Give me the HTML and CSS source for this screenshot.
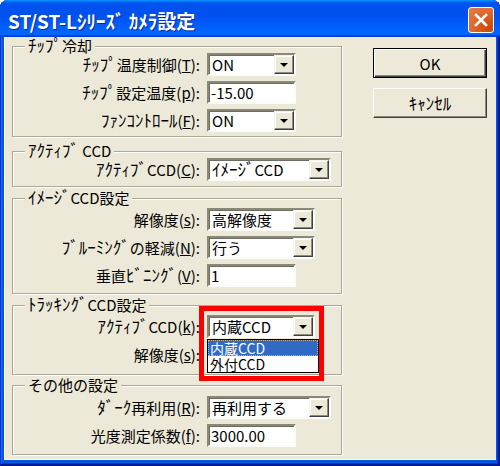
FILE: index.html
```html
<!DOCTYPE html>
<html lang="ja">
<head>
    <meta charset="UTF-8">
    <title>ST/ST-Lｼﾘｰｽﾞ ｶﾒﾗ設定</title>
    <link rel="stylesheet" href="styles.css">
</head>
<body>

    <div class="window">
        <!-- Title bar -->
        <div class="titlebar">
            <span class="title">ST/ST-Lｼﾘｰｽﾞ ｶﾒﾗ設定</span>
            <span class="close">
                <svg width="14" height="14" viewBox="0 0 14 14">
                    <path d="M2 2 L12 12 M12 2 L2 12" stroke="#fff" stroke-width="2.6" stroke-linecap="square"/>
                </svg>
            </span>
        </div>

        <div class="client">
            <div class="groups">

                <!-- Chip cooling -->
                <fieldset class="group g-cool">
                    <legend><span class="hk">ﾁｯﾌﾟ</span>冷却</legend>
                    <div class="row">
                        <label><span class="hk">ﾁｯﾌﾟ</span>温度制御(<u>T</u>):</label>
                        <div class="combo w-s"><span class="val">ON</span><span class="drop"></span></div>
                    </div>
                    <div class="row">
                        <label><span class="hk">ﾁｯﾌﾟ</span>設定温度(<u>p</u>):</label>
                        <div class="edit w-s">-15.00</div>
                    </div>
                    <div class="row">
                        <label><span class="hk">ﾌｧﾝｺﾝﾄﾛｰﾙ</span>(<u>F</u>):</label>
                        <div class="combo w-s"><span class="val">ON</span><span class="drop"></span></div>
                    </div>
                </fieldset>

                <!-- Active CCD -->
                <fieldset class="group g-active">
                    <legend><span class="hk">ｱｸﾃｨﾌﾞ</span> CCD</legend>
                    <div class="row">
                        <label><span class="hk">ｱｸﾃｨﾌﾞ</span>CCD(<u>C</u>):</label>
                        <div class="combo w-l"><span class="val"><span class="hk">ｲﾒｰｼﾞ</span>CCD</span><span class="drop"></span></div>
                    </div>
                </fieldset>

                <!-- Image CCD -->
                <fieldset class="group g-image">
                    <legend><span class="hk">ｲﾒｰｼﾞ</span>CCD設定</legend>
                    <div class="row">
                        <label>解像度(<u>s</u>):</label>
                        <div class="combo w-m"><span class="val">高解像度</span><span class="drop"></span></div>
                    </div>
                    <div class="row">
                        <label><span class="hk">ﾌﾞﾙｰﾐﾝｸﾞ</span>の軽減(<u>N</u>):</label>
                        <div class="combo w-m"><span class="val">行う</span><span class="drop"></span></div>
                    </div>
                    <div class="row">
                        <label>垂直<span class="hk">ﾋﾞﾆﾝｸﾞ</span>(<u>V</u>):</label>
                        <div class="edit w-s">1</div>
                    </div>
                </fieldset>

                <!-- Tracking CCD -->
                <fieldset class="group g-track">
                    <legend><span class="hk">ﾄﾗｯｷﾝｸﾞ</span>CCD設定</legend>
                    <div class="row">
                        <label><span class="hk">ｱｸﾃｨﾌﾞ</span>CCD(<u>k</u>):</label>
                        <div class="combo w-m open">
                            <span class="val">内蔵CCD</span><span class="drop"></span>
                            <ul class="droplist">
                                <li class="sel">内蔵CCD</li>
                                <li>外付CCD</li>
                            </ul>
                            <div class="highlight"></div>
                        </div>
                    </div>
                    <div class="row">
                        <label>解像度(<u>s</u>):</label>
                        <!-- hidden under the open list -->
                        <div class="combo w-m"><span class="val"></span><span class="drop"></span></div>
                    </div>
                </fieldset>

                <!-- Other -->
                <fieldset class="group g-other">
                    <legend>その他の設定</legend>
                    <div class="row">
                        <label><span class="hk">ﾀﾞｰｸ</span>再利用(<u>R</u>):</label>
                        <div class="combo w-l"><span class="val">再利用する</span><span class="drop"></span></div>
                    </div>
                    <div class="row">
                        <label>光度測定係数(<u>f</u>):</label>
                        <div class="edit w-s">3000.00</div>
                    </div>
                </fieldset>

            </div>

            <div class="buttons">
                <div class="btn default">OK</div>
                <div class="btn"><span class="hk">ｷｬﾝｾﾙ</span></div>
            </div>
        </div>
    </div>

</body>
</html>
```

FILE: styles.css
```css
* {
    box-sizing: border-box;
}
body {
    margin: 0;
    width: 500px;
    height: 466px;
    overflow: hidden;
    background-color: #fff;
    font-family: "Noto Sans CJK JP", sans-serif;
    font-size: 15px;
    color: #000;
}
/* half-width katakana are drawn small in Noto, bump them up */
.hk {
    font-size: 17px;
    line-height: 0;
}
.window {
    width: 500px;
    height: 466px;
    display: flex;
    flex-direction: column;
    padding: 0 4px 6px 4px;
    background-color: #0855dd;
    border-radius: 8px 8px 0 0;
    box-shadow: inset -1px -1px #00138c, inset 1px 1px #0831d9, inset -2px -2px #001ea0, inset 2px 2px #166aee, inset -3px -3px #003bda, inset 3px 3px #0855dd;
}

/* title bar */
.titlebar {
    height: 37px;
    margin: 0 -4px;
    padding: 0 6px 0 8px;
    display: flex;
    align-items: center;
    border-radius: 8px 8px 0 0;
    background: linear-gradient(180deg, #0997ff, #0053ee 8%, #0050ee 40%, #06f 88%, #06f 93%, #005bff 95%, #003dd7 96%, #003dd7);
}
.title {
    color: #fff;
    font-weight: bold;
    font-size: 19px;
    line-height: 24px;
    padding-top: 5px;
    text-shadow: 1px 1px 0 #0a2a9a;
}
.close {
    margin-left: auto;
    width: 26px;
    height: 26px;
    border: 1px solid #fff;
    border-radius: 3px;
    display: flex;
    align-items: center;
    justify-content: center;
    background: radial-gradient(circle at 85% 85%, #cc4600 0%, #dc6527 50%, #e57f4d 100%);
    margin-top: 3px;
}

/* client area */
.client {
    flex: 1;
    display: flex;
    background-color: #ece9d8;
    border-left: 1px solid #fffbef;
    border-bottom: 1px solid #fffbef;
}
.groups {
    width: 330px;
    margin-left: 7px;
    display: flex;
    flex-direction: column;
}
.group {
    margin: 0;
    padding: 0;
    min-width: 0;
    border: 1px solid #aca899;
    box-shadow: 1px 1px 0 #fff, inset 1px 1px 0 #fff;
}
.group legend {
    margin-left: 12px;
    padding: 0 3px;
    line-height: 14px;
    background-color: #ece9d8;
}
.g-cool {
    margin-top: 2px;
    padding-bottom: 4px;
}
.g-active {
    margin-top: 7px;
    padding-bottom: 5px;
}
.g-image {
    margin-top: 4px;
    padding: 3px 0 6px;
}
.g-track {
    margin-top: 4px;
    padding: 3px 0 8px;
}
.g-other {
    margin-top: 3px;
    padding: 4px 0 7px;
}
.row {
    height: 23px;
    display: flex;
    align-items: center;
    gap: 7px;
}
.row + .row {
    margin-top: 5px;
}
.row label {
    width: 187px;
    text-align: right;
    line-height: 23px;
    white-space: nowrap;
}

/* combo boxes and edits */
.combo, .edit {
    position: relative;
    height: 23px;
    background-color: #fff;
    border: 2px solid;
    border-color: #8a8877 #fcfcf8 #fcfcf8 #8a8877;
    box-shadow: inset 1px 1px 0 #6f6d62;
    display: flex;
    align-items: center;
    line-height: 19px;
    white-space: nowrap;
}
.edit {
    padding-left: 2px;
}
.w-s {
    width: 89px;
}
.w-m {
    width: 108px;
}
.w-l {
    width: 124px;
}
.val {
    flex: 1;
    padding-left: 3px;
}
.drop {
    width: 20px;
    height: 19px;
    background-color: #ece9d8;
    border: 1px solid;
    border-color: #f4f3ee #404040 #404040 #f4f3ee;
    box-shadow: inset -1px -1px 0 #8d8b80, inset 1px 1px 0 #fff;
    display: flex;
    align-items: center;
    justify-content: center;
}
.drop::after {
    content: "";
    border-left: 4px solid transparent;
    border-right: 4px solid transparent;
    border-top: 4px solid #000;
    margin-top: 1px;
}

/* open drop-down of the tracking CCD combo */
.droplist {
    position: absolute;
    top: 22px;
    left: -2px;
    width: 112px;
    margin: 0;
    padding: 0;
    list-style-type: none;
    background-color: #fff;
    border: 1px solid #000;
    font-size: 14px;
    z-index: 2;
}
.droplist li {
    height: 16px;
    line-height: 16px;
    padding-left: 2px;
}
.droplist li.sel {
    background-color: #316ac5;
    color: #fff;
    outline: 1px dotted #e9b04a;
    outline-offset: -1px;
}
.highlight {
    position: absolute;
    left: -10px;
    top: -11px;
    width: 125px;
    height: 75px;
    border: 5px solid #ff0000;
    z-index: 3;
}

/* buttons */
.buttons {
    margin-left: 31px;
    padding-top: 11px;
    display: flex;
    flex-direction: column;
    gap: 10px;
}
.btn {
    width: 114px;
    height: 30px;
    display: flex;
    align-items: center;
    justify-content: center;
    background-color: #ece9d8;
    border: 1px solid;
    border-color: #fff #404040 #404040 #fff;
    box-shadow: inset -1px -1px 0 #8d8b80;
}
.btn.default {
    border: 1px solid #000;
    box-shadow: inset 1px 1px 0 #fff, inset -1px -1px 0 #404040, inset -2px -2px 0 #8d8b80;
}
```
